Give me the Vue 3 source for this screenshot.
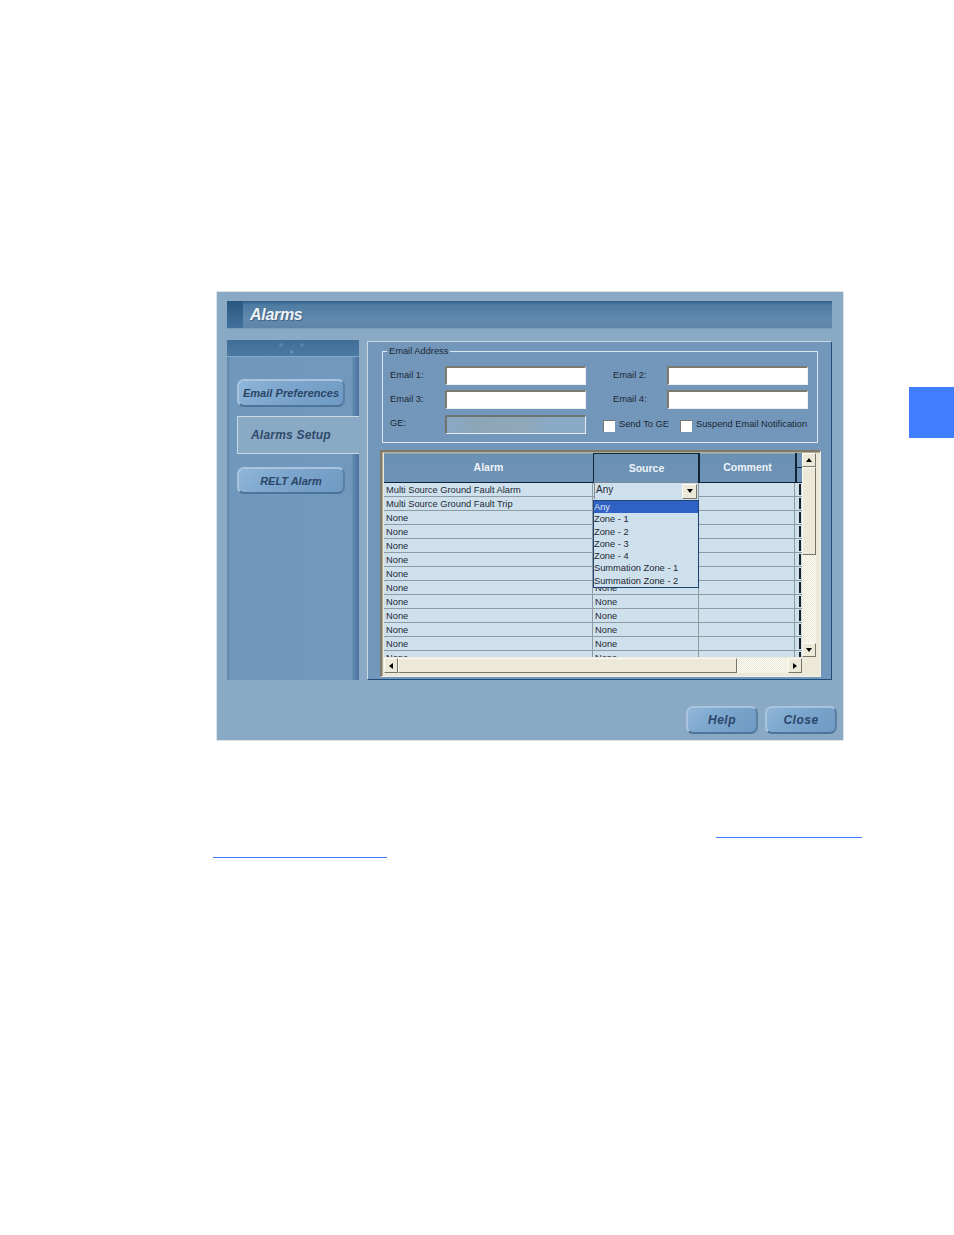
<script setup>
const rows = [
  { alarm: 'Multi Source Ground Fault Alarm', source: '' },
  { alarm: 'Multi Source Ground Fault Trip', source: '' },
  ...Array.from({ length: 11 }, () => ({ alarm: 'None', source: 'None' }))
]
const zones = ['Zone - 1', 'Zone - 2', 'Zone - 3', 'Zone - 4', 'Summation Zone - 1', 'Summation Zone - 2']
</script>

<template>
  <div class="page">
    <div class="side-tab"></div>
    <section class="window">
      <header class="title-bar">
        <span class="title-accent"></span>
        <h1 class="title">Alarms</h1>
      </header>
      <div class="body">
        <aside class="sidebar">
          <div class="strip">
            <svg class="dots" width="32" height="14" viewBox="0 0 32 14">
              <circle cx="4" cy="4" r="1.800" fill="#5f88ad" />
              <circle cx="14.500" cy="11" r="1.800" fill="#668fb3" />
              <circle cx="25" cy="4" r="1.800" fill="#5f88ad" />
            </svg>
          </div>
          <button class="pill email-pref">Email Preferences</button>
          <div class="active-tab">Alarms Setup</div>
          <button class="pill relt">RELT Alarm</button>
        </aside>
        <main class="panel">
          <div class="group">
            <span class="legend">Email Address</span>
            <div class="fields">
              <label>Email 1:</label>
              <span class="input"></span>
              <span></span>
              <label>Email 2:</label>
              <span class="input"></span>
              <label>Email 3:</label>
              <span class="input"></span>
              <span></span>
              <label>Email 4:</label>
              <span class="input"></span>
              <label class="ge">GE:</label>
              <span class="input disabled"></span>
              <div class="checks">
                <span class="check"><i class="box"></i>Send To GE</span>
                <span class="check"><i class="box"></i>Suspend Email Notification</span>
              </div>
            </div>
          </div>
          <div class="grid-box">
            <div class="grid-top">
              <div class="table">
                <div class="thead">
                  <div class="th col-alarm">Alarm</div>
                  <div class="th col-source focus">Source</div>
                  <div class="th col-comment">Comment</div>
                  <div class="th-mini"><i></i><i></i></div>
                </div>
                <div v-for="(row, i) in rows" :key="i" class="tr">
                  <div class="td col-alarm">{{ row.alarm }}</div>
                  <div class="td col-source">{{ row.source }}</div>
                  <div class="td col-comment"></div>
                  <div class="td col-mini"><i></i></div>
                </div>
                <div class="combo">
                  <span class="combo-text">Any</span>
                  <span class="combo-btn"><i class="tri down"></i></span>
                </div>
                <ul class="dropdown">
                  <li class="selected">Any</li>
                  <li v-for="z in zones" :key="z">{{ z }}</li>
                </ul>
              </div>
              <div class="vscroll">
                <span class="sb-btn"><i class="tri up"></i></span>
                <span class="v-thumb"></span>
                <span class="v-track"></span>
                <span class="sb-btn"><i class="tri down"></i></span>
              </div>
            </div>
            <div class="hscroll">
              <span class="sb-btn"><i class="tri left"></i></span>
              <span class="h-thumb"></span>
              <span class="h-track"></span>
              <span class="sb-btn"><i class="tri right"></i></span>
              <span class="corner"></span>
            </div>
          </div>
        </main>
      </div>
      <footer class="footer">
        <button class="pill action">Help</button>
        <button class="pill action">Close</button>
      </footer>
    </section>
    <div class="links">
      <div class="link-line first"></div>
      <div class="link-line second"></div>
    </div>
  </div>
</template>

<style>
html, body { margin: 0; background: #fff; }
</style>

<style scoped>
.page {
  position: relative;
  width: 954px;
  height: 1235px;
  padding-top: 291px;
  box-sizing: border-box;
  background: #fff;
  overflow: hidden;
  font-family: "Liberation Sans", Arial, sans-serif;
  font-size: 9.3px;
  color: #1c2833;
}
.side-tab {
  position: absolute;
  left: 909px;
  top: 387px;
  width: 45px;
  height: 51px;
  background: #3f7fff;
}
.window {
  width: 628px;
  height: 450px;
  margin-left: 216px;
  padding: 9px 6px 0 10px;
  box-sizing: border-box;
  background: #8aa9c5;
  border: 1px solid #dfe5ea;
}
.title-bar {
  display: flex;
  align-items: center;
  height: 28px;
  margin-right: 5px;
  background: linear-gradient(#2f5d87 0, #4f7ca3 4px, #6289ae 18px, #5d84a9 100%);
  border-bottom: 1px solid #7d9db9;
  box-sizing: border-box;
}
.title-accent {
  width: 16px;
  height: 100%;
  background: linear-gradient(#2a5780, #41719c);
}
.title {
  margin: 0 0 0 7px;
  font-size: 16px;
  font-weight: 700;
  font-style: italic;
  letter-spacing: -0.3px;
  color: #eef3f7;
  text-shadow: 1px 1px 1px #3a5f82;
}
.body {
  display: flex;
  gap: 8px;
  margin-top: 11px;
  margin-right: -1px;
}
.sidebar {
  flex: none;
  width: 132px;
  height: 340px;
  display: flex;
  flex-direction: column;
  align-items: flex-start;
  background: linear-gradient(90deg, #5d86ac 0, #7097bc 4px, #7199bd 124px, #5680a7 128px, #4c769e 132px);
}
.strip {
  width: 100%;
  height: 17px;
  display: flex;
  justify-content: center;
  background: linear-gradient(#3f6d97, #4d7aa3);
  border-bottom: 1px solid #8aa9c5;
  box-sizing: border-box;
}
.dots { margin-top: 1px; }
.pill {
  padding: 0;
  font-family: inherit;
  font-weight: 700;
  font-style: italic;
  color: #2b4567;
  background: linear-gradient(135deg, #8fb6da 0, #7ba5cc 45%, #6f9ac3 100%);
  border: 2px solid #a9c4dc;
  border-right-color: #5a7fa3;
  border-bottom-color: #4f7499;
  border-radius: 7px;
  box-sizing: border-box;
}
.email-pref {
  width: 108px;
  height: 28px;
  margin: 22px 0 0 10px;
  font-size: 11px;
  letter-spacing: 0.05px;
}
.active-tab {
  width: 122px;
  height: 38px;
  margin: 9px 0 0 10px;
  padding-left: 13px;
  box-sizing: border-box;
  display: flex;
  align-items: center;
  background: #8aa9c5;
  border: 1px solid #c9d9e6;
  border-right: 0;
  font-size: 12px;
  font-weight: 700;
  font-style: italic;
  letter-spacing: 0.2px;
  color: #2f4a6b;
}
.relt {
  width: 108px;
  height: 27px;
  margin: 13px 0 0 10px;
  font-size: 11px;
}
.panel {
  flex: none;
  width: 465px;
  height: 339px;
  margin-top: 1px;
  box-sizing: border-box;
  padding: 9px 0 0;
  background: #7397bb;
  border: 1px solid #1f4c78;
  border-top-color: #c9d9e6;
  border-left-color: #c9d9e6;
}
.group {
  position: relative;
  width: 436px;
  height: 92px;
  margin-left: 14px;
  box-sizing: border-box;
  border: 1px solid #dce7f0;
}
.legend {
  position: absolute;
  left: 4px;
  top: -7px;
  padding: 0 2px;
  background: #7397bb;
  line-height: 12px;
  white-space: nowrap;
}
.fields {
  display: grid;
  grid-template-columns: 55px 141px 27px 54px 141px;
  grid-template-rows: 19px 19px 20px;
  row-gap: 5px;
  padding: 14px 0 0 7px;
  align-items: center;
}
.fields label {
  white-space: nowrap;
  padding-bottom: 2px;
}
.fields label.ge { padding-bottom: 2px; }
.input {
  height: 19px;
  box-sizing: border-box;
  background: #fff;
  border: 1px solid #efefef;
  border-top: 2px solid #7d7a6e;
  border-left: 2px solid #7d7a6e;
}
.input.disabled {
  align-self: end;
  background: linear-gradient(90deg, #8aa9c5 0, #8ca5b8 20%, #8fa8ba 60%, #8aa9c5 72%);
  border: 1px solid #e6edf3;
  border-top: 2px solid #6f7470;
  border-left: 2px solid #6f7470;
}
.checks {
  grid-column: 3 / 6;
  display: flex;
  gap: 11px;
  padding-left: 17px;
  margin-top: 1px;
}
.check {
  display: flex;
  align-items: flex-start;
  gap: 4px;
  white-space: nowrap;
  line-height: 12px;
}
.box {
  width: 12px;
  height: 12px;
  margin-top: 2px;
  box-sizing: border-box;
  background: #fff;
  border-top: 1px solid #77786f;
  border-left: 1px solid #77786f;
}
.grid-box {
  display: flex;
  flex-direction: column;
  width: 441px;
  height: 227px;
  margin: 7px 0 0 12px;
  box-sizing: border-box;
  padding: 1px 4px 3px 2px;
  background: #ece9d8;
  border: 1px solid #f2f1e8;
  border-top-color: #7f7a68;
  border-left-color: #7f7a68;
  border-top-width: 2px;
  border-left-width: 2px;
  box-shadow: inset 1px 1px 0 #b4ae97;
}
.grid-top {
  display: flex;
  height: 204px;
}
.table {
  position: relative;
  width: 418px;
  height: 204px;
  overflow: hidden;
  background: #cfe0ed;
}
.thead {
  display: flex;
  height: 30px;
  background: #0f2438;
  border-bottom: 1px solid #0f2438;
  box-sizing: border-box;
}
.th {
  display: flex;
  align-items: center;
  justify-content: center;
  padding-bottom: 2px;
  background: linear-gradient(#6a90b4, #6d92b6);
  color: #eef3f7;
  font-size: 10.5px;
  font-weight: 700;
  box-sizing: border-box;
  border-top: 1px solid #8aa9c5;
}
.th.col-alarm { width: 209px; }
.th.col-source {
  width: 106px;
  padding: 0 0 0 1px;
  border-left: 1px solid #0f2438;
  border-top-color: #0f2438;
  border-right: 1px solid #0f2438;
}
.th.col-comment { width: 95px; margin-left: 1px; }
.th-mini {
  flex: 1;
  display: flex;
  flex-direction: column;
  gap: 1px;
  margin-left: 2px;
}
.th-mini i { display: block; flex: 1; background: #6d92b6; }
.tr {
  display: flex;
  height: 14px;
  box-sizing: border-box;
  border-bottom: 1px solid #8e9ba3;
  line-height: 13px;
  font-size: 9.3px;
}
.td {
  box-sizing: border-box;
  white-space: nowrap;
  padding-top: 1px;
}
.td.col-alarm { width: 209px; padding-left: 2px; border-right: 1px solid #8e9ba3; }
.td.col-source { width: 106px; padding-left: 2px; border-right: 1px solid #8e9ba3; }
.td.col-comment { width: 96px; border-right: 1px solid #8e9ba3; }
.td.col-mini { flex: 1; position: relative; }
.td.col-mini i {
  position: absolute;
  left: 4px;
  top: 1px;
  width: 2px;
  height: 11px;
  background: #1c2024;
}
.combo {
  position: absolute;
  left: 210px;
  top: 29px;
  width: 104px;
  height: 17px;
  box-sizing: border-box;
  display: flex;
  align-items: center;
  justify-content: space-between;
  padding: 0 1px 0 1px;
  background: #cfe0ed;
  border-top: 1px solid #7f8b92;
  border-left: 1px solid #7f8b92;
  font-size: 10px;
}
.combo-text { padding-bottom: 3px; }
.combo-btn {
  width: 15px;
  height: 15px;
  display: flex;
  align-items: center;
  justify-content: center;
  background: #ece9d8;
  border: 1px solid #fff;
  border-right-color: #77746a;
  border-bottom-color: #77746a;
  box-sizing: border-box;
}
.dropdown {
  position: absolute;
  left: 209px;
  top: 47px;
  width: 106px;
  height: 88px;
  margin: 0;
  padding: 0;
  box-sizing: border-box;
  list-style: none;
  background: #cfe0ed;
  border: 1px solid #1f4472;
  font-size: 9.3px;
  line-height: 12.3px;
  white-space: nowrap;
}
.dropdown li { height: 12.3px; }
.dropdown .selected {
  background: #2f62c4;
  color: #dfe8f5;
}
.vscroll {
  width: 14px;
  display: flex;
  flex-direction: column;
}
.sb-btn {
  flex: none;
  width: 14px;
  height: 14px;
  display: flex;
  align-items: center;
  justify-content: center;
  box-sizing: border-box;
  background: #ece9d8;
  border: 1px solid #fbfaf3;
  border-right-color: #77746a;
  border-bottom-color: #77746a;
}
.v-thumb {
  height: 88px;
  box-sizing: border-box;
  background: #ece9d8;
  border: 1px solid #fbfaf3;
  border-right-color: #77746a;
  border-bottom-color: #77746a;
}
.v-track, .h-track {
  flex: 1;
  background: repeating-conic-gradient(#ece9d8 0 25%, #fbfaf5 0 50%) 0 0 / 2px 2px;
}
.hscroll {
  display: flex;
  height: 15px;
  margin-top: 1px;
}
.hscroll .sb-btn { height: 15px; }
.h-thumb {
  width: 339px;
  box-sizing: border-box;
  background: #ece9d8;
  border: 1px solid #fbfaf3;
  border-right-color: #77746a;
  border-bottom-color: #77746a;
}
.corner { width: 14px; background: #ece9d8; }
.tri { width: 0; height: 0; display: block; border: 3px solid transparent; }
.tri.up { border-top: 0; border-bottom: 4px solid #000; }
.tri.down { border-bottom: 0; border-top: 4px solid #000; }
.tri.left { border-left: 0; border-right: 4px solid #000; }
.tri.right { border-right: 0; border-left: 4px solid #000; }
.footer {
  display: flex;
  justify-content: flex-end;
  gap: 7px;
  margin-top: 26px;
}
.action {
  width: 72px;
  height: 28px;
  font-size: 12px;
  letter-spacing: 0.5px;
  color: #2b466b;
}
.links { margin-top: 96px; }
.link-line { height: 1px; background: #3f7fff; }
.link-line.first { width: 146px; margin-left: 716px; }
.link-line.second { width: 174px; margin: 19px 0 0 213px; }
</style>
